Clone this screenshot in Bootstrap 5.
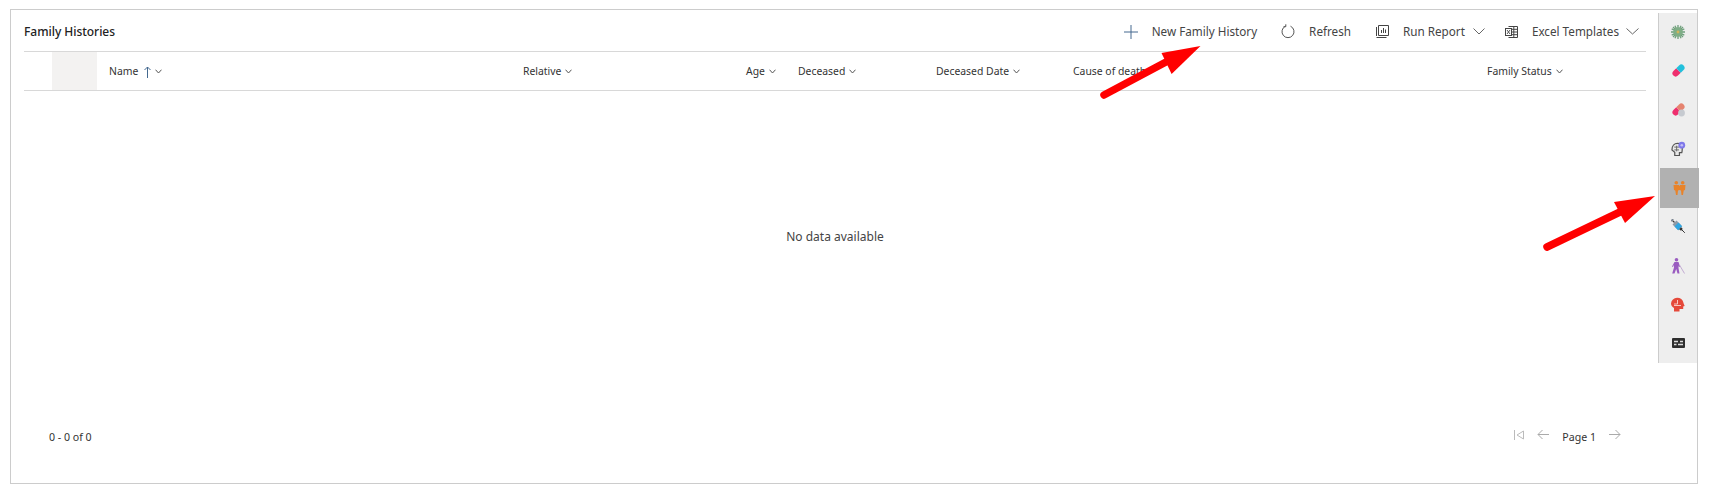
<!DOCTYPE html>
<html lang="en"><head><meta charset="utf-8"><title>Family Histories</title>
<link href="https://cdn.jsdelivr.net/npm/bootstrap@5.3.0/dist/css/bootstrap.min.css" rel="stylesheet">
<style>
html,body{height:100%;background:#fff}
body{font-family:"Noto Sans","Open Sans",sans-serif;font-size:11.5px;color:#333;overflow:hidden}
.frame{margin:9px 12px 0 10px;height:475px;border:1px solid #ccc}
.pane{padding:0 12px 0 13px;min-width:0}
.titlebar{height:42px;border-bottom:1px solid #d8d8d8}
.title-text{font-size:12px;font-weight:500;color:#222;letter-spacing:-.03px;padding-top:2px}
.tool{color:#444;font-size:11.7px;line-height:1;padding:2px 7px 0 0}
.headrow{height:39px;border-bottom:1px solid #d8d8d8;font-size:10.4px;color:#333}
.gutter{width:28px}
.greycell{width:45px;height:38px;background:#f3f2f1}
.colh{padding-left:8px;padding-top:2px;gap:4px;display:flex;align-items:center}
.c-name{width:418px;padding-left:12px}.c-rel{width:223px}.c-age{width:52px}.c-dec{width:138px}.c-date{width:137px}.c-cause{width:414px}.c-status{width:167px}
.greycell+.colh{padding-left:12px}
.emptybox{height:291px;font-size:12px;color:#444}
.pagerbar{height:48px;margin-top:32px;padding:0 25px;font-size:10.6px;color:#333}
.pager-nav{margin-bottom:6px}
.pager-label{position:relative;top:3px}
.rail{width:39px;margin-top:3px;height:350px;border-left:1px solid #ccc;background:#eee}
.railitem{height:38.67px}
.railitem.on{background:#b1b1b1;margin:0 -2px 0 1px;height:40px}
.callout{position:absolute;left:0;top:0;pointer-events:none}
</style></head><body>
<div class="frame d-flex">
  <div class="pane flex-grow-1 d-flex flex-column">
    <div class="titlebar d-flex align-items-center justify-content-between">
      <span class="title-text">Family Histories</span>
      <div class="d-flex align-items-center tool">
        <svg width="14" height="14" viewBox="0 0 14 14" fill="none" stroke="#44698f"><path d="M7 0v14M0 7h14"/></svg>
        <span style="margin-left:14px">New Family History</span>
        <svg style="margin-left:24px" width="14" height="15" viewBox="0 0 14 15" fill="none" stroke="#555"><path d="M4.500 2.200A6 6 0 1 0 9.500 2.200"/><path d="M4.800 .3v2.400H2.500"/></svg>
        <span style="margin-left:14px">Refresh</span>
        <svg style="margin-left:25px" width="13" height="13" viewBox="0 0 13 13" fill="none" stroke="#444"><path d="M2.500 .5h10v10h-10zM.5 2v9M.5 12.500h10"/><path d="M5.500 8V5M7.500 8V3M9.500 8V4.500"/></svg>
        <span style="margin-left:14px">Run Report</span>
        <svg style="margin-left:8px" width="12" height="7" viewBox="0 0 12 7" fill="none" stroke="#666"><path d="M.5.5 6 6 11.500.5"/></svg>
        <svg style="margin-left:20px" width="13" height="12" viewBox="0 0 13 12" fill="none" stroke="#444"><path d="M3.500.5h9v11h-9M6 3.300h6M6 6h6M6 8.700h6M8.800.5v11"/><rect x=".5" y="2.500" width="6" height="7" fill="#fff"/><path d="M2 4l3 4M5 4 2 8" stroke="#444" stroke-width=".9"/></svg>
        <span style="margin-left:14px">Excel Templates</span>
        <svg style="margin-left:7px" width="13" height="7" viewBox="0 0 13 7" fill="none" stroke="#666"><path d="M.5.5 6.500 6 12.500.5"/></svg>
      </div>
    </div>
    <div class="headrow d-flex align-items-center">
      <div class="gutter"></div><div class="greycell"></div>
      <div class="c-name colh"><span>Name</span>
        <svg style="margin-left:2px" width="7" height="12" viewBox="0 0 7 12" fill="none" stroke="#44698f"><path d="M3.500 12V1M.5 4l3-3 3 3"/></svg>
        <svg width="7" height="5" viewBox="0 0 7 5" fill="none" stroke="#555"><path d="M.5.7 3.500 4 6.500.7"/></svg></div>
      <div class="c-rel colh"><span>Relative</span><svg width="7" height="5" viewBox="0 0 7 5" fill="none" stroke="#555"><path d="M.5.7 3.500 4 6.500.7"/></svg></div>
      <div class="c-age colh"><span>Age</span><svg width="7" height="5" viewBox="0 0 7 5" fill="none" stroke="#555"><path d="M.5.7 3.500 4 6.500.7"/></svg></div>
      <div class="c-dec colh"><span>Deceased</span><svg width="7" height="5" viewBox="0 0 7 5" fill="none" stroke="#555"><path d="M.5.7 3.500 4 6.500.7"/></svg></div>
      <div class="c-date colh"><span>Deceased Date</span><svg width="7" height="5" viewBox="0 0 7 5" fill="none" stroke="#555"><path d="M.5.7 3.500 4 6.500.7"/></svg></div>
      <div class="c-cause colh"><span>Cause of death</span></div>
      <div class="c-status colh"><span>Family Status</span><svg width="7" height="5" viewBox="0 0 7 5" fill="none" stroke="#555"><path d="M.5.7 3.500 4 6.500.7"/></svg></div>
    </div>
    <div class="emptybox d-flex align-items-center justify-content-center">No data available</div>
    <div class="pagerbar d-flex align-items-center justify-content-between">
      <span>0 - 0 of 0</span>
      <div class="pager-nav d-flex align-items-center">
        <svg width="10" height="10" viewBox="0 0 10 10" fill="none" stroke="#bbb"><path d="M.5 0v10M9.500 1 3 5l6.500 4z"/></svg>
        <svg style="margin-left:13px" width="12" height="11" viewBox="0 0 12 11" fill="none" stroke="#aaa"><path d="M12 5.500H1M5.500 1 1 5.500 5.500 10"/></svg>
        <span class="pager-label" style="margin-left:13px">Page 1</span>
        <svg style="margin-left:13px" width="12" height="11" viewBox="0 0 12 11" fill="none" stroke="#aaa"><path d="M0 5.500h11M6.500 1 11 5.500 6.500 10"/></svg>
      </div>
    </div>
  </div>
  <div class="rail flex-shrink-0">
    <div class="railitem d-flex align-items-center justify-content-center">
      <svg width="14" height="14" viewBox="0 0 16 16"><g stroke="#6f9f7c" stroke-width="1.500"><path d="M8 0v16M0 8h16M2.300 2.300l11.400 11.400M13.700 2.300 2.300 13.700M4.500 .8 11.500 15.200M11.500 .8 4.500 15.200M.8 4.500 15.200 11.500M15.200 4.500 .8 11.500"/></g><circle cx="8" cy="8" r="5.300" fill="#7fae86"/><circle cx="8" cy="8" r="1.600" fill="#d3b45c"/></svg></div>
    <div class="railitem d-flex align-items-center justify-content-center">
      <svg width="13" height="13" viewBox="0 0 13 13"><g transform="rotate(-45 6.500 6.500)"><path d="M6.500 3.300H2.500a3.200 3.200 0 0 0 0 6.400h4z" fill="#ee2f6e"/><path d="M6.500 3.300h4a3.200 3.200 0 0 1 0 6.400h-4z" fill="#22c0dc"/></g></svg></div>
    <div class="railitem d-flex align-items-center justify-content-center">
      <svg width="13" height="14" viewBox="0 0 13 14"><g transform="rotate(-45 6.500 6.500)"><path d="M6.500 3.300H2.500a3.200 3.200 0 0 0 0 6.400h4z" fill="#ee2f6e"/><path d="M6.500 3.300h4a3.200 3.200 0 0 1 0 6.400h-4z" fill="#e5836f"/></g><circle cx="9.500" cy="10" r="3.400" fill="#c6cad0"/></svg></div>
    <div class="railitem d-flex align-items-center justify-content-center">
      <svg width="15" height="15" viewBox="0 0 16 16"><path d="M4 15.500V12L1 9.500C1 5 3.500 2.500 7 2.500c3 0 5 1.500 5 5 0 2 0 3.500-.5 5H9v3z" fill="#e8e8e8" stroke="#555" stroke-width="1.300"/><path d="M3.500 6.500h5M3.500 9.500h5M6 5v6" stroke="#666" stroke-width="1"/><circle cx="11.500" cy="4.500" r="3.600" fill="#7f78ea"/><circle cx="11.500" cy="4.500" r="1.400" fill="#c3c0f5"/></svg></div>
    <div class="railitem on d-flex align-items-center justify-content-center">
      <svg width="13" height="14" viewBox="0 0 13 14" fill="#e8832a"><circle cx="3.300" cy="1.800" r="1.800"/><circle cx="9.700" cy="1.800" r="1.800"/><path d="M.5 4h5.300l.7 1 .7-1h5.300l-.5 5-1.300.5-.7 4.500H8.500l-.5-4.500-1.500-.5-1.500.5-.5 4.500H3l-.7-4.500L1 9z"/></svg></div>
    <div class="railitem d-flex align-items-center justify-content-center">
      <svg width="15" height="15" viewBox="0 0 16 16"><g transform="rotate(45 8 8)"><path d="M-2.500 6.500h2v3h-2z" fill="#7b8591"/><path d="M-.5 7.300h2.500v1.400H-.5z" fill="#333"/><path d="M2 5h8.500v6H2z" fill="#8d99a6"/><path d="M5 5h5.500v6H5z" fill="#2fa6e2"/><path d="M10.500 6.500h2l1 1.500-1 1.500h-2z" fill="#333"/><path d="M13 8h4.500" stroke="#333" stroke-width="1"/></g></svg></div>
    <div class="railitem d-flex align-items-center justify-content-center">
      <svg width="14" height="16" viewBox="0 0 14 16" fill="#9a5cc0"><circle cx="5.500" cy="1.800" r="1.800"/><path d="M3.500 4h4l1.500 4.500-1 .5L7.500 7.500V10l1 5.500h-2L5.200 11 3.500 15.500H1.200L3 9.500V6.800L2 9 1 8.500z"/><path d="M8.500 7l5 8.500" stroke="#b79acc" stroke-width=".8"/></svg></div>
    <div class="railitem d-flex align-items-center justify-content-center">
      <svg width="14" height="15" viewBox="0 0 14 15"><path d="M3 14.500V11C1 10 0 8 0 6.500A6.300 6.300 0 0 1 12.500 6c0 1 1.500 2.500 1 3l-1.300.5V12H8.500v2.500z" fill="#e5493a"/><path d="M6.500 3v4H3M3 8.500h7" stroke="#f8d5cf" stroke-width=".9" fill="none"/></svg></div>
    <div class="railitem d-flex align-items-center justify-content-center">
      <svg width="13" height="10" viewBox="0 0 13 10"><rect width="13" height="10" rx="1" fill="#2e2e2e"/><path d="M2 3.500h4M8 3.500h3M2 6.500h2.500M6 6.500h5" stroke="#ddd" stroke-width="1.300"/></svg></div>
  </div>
</div>
<svg class="callout" width="1710" height="497" viewBox="0 0 1710 497">
  <path d="M1104 95 1166 62" stroke="#f00" stroke-width="7.500" stroke-linecap="round"/>
  <path d="M1200.500 46 1161.500 53 1171.600 74z" fill="#f00"/>
  <path d="M1547 247 1620 212" stroke="#f00" stroke-width="7.500" stroke-linecap="round"/>
  <path d="M1655 196 1614 202 1625 223z" fill="#f00"/>
</svg>
</body></html>
